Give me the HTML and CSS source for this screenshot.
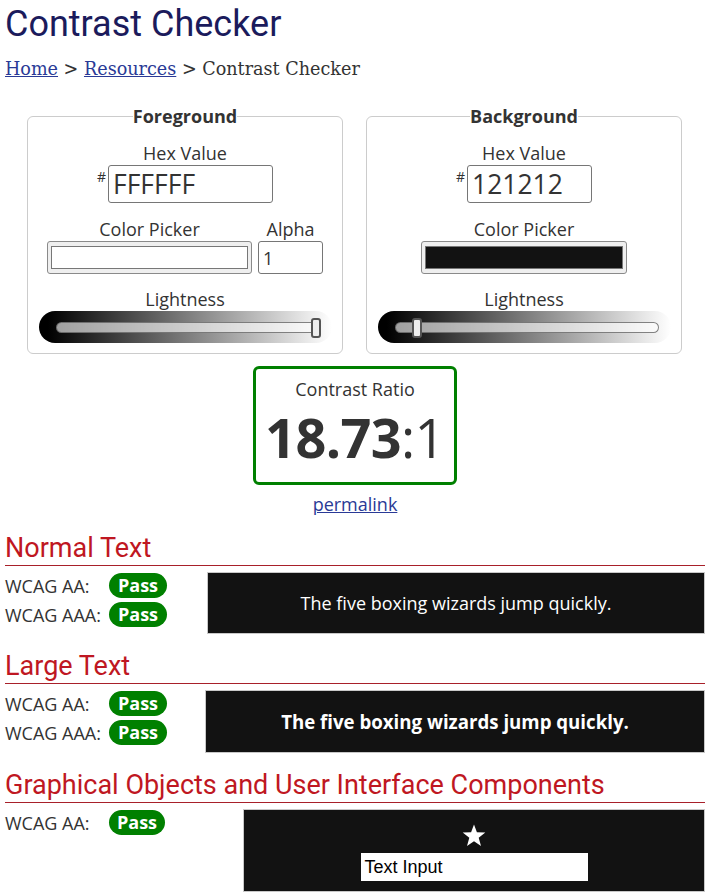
FILE: index.html
```
<!DOCTYPE html>
<html lang="en">
<head>
<meta charset="utf-8">
<title>Contrast Checker</title>
<link rel="stylesheet" href="styles.css">
</head>
<body>
<main class="page">
  <h1 class="title">Contrast Checker</h1>
  <nav class="crumbs"><a href="#">Home</a> &gt; <a href="#">Resources</a> &gt; Contrast Checker</nav>

  <div class="pickers">
    <fieldset class="panel">
      <legend class="panel-legend">Foreground</legend>
      <div class="field-label">Hex Value</div>
      <div class="hex-row">
        <span class="hash">#</span>
        <input class="hex-input hex-fg" type="text" value="FFFFFF">
      </div>
      <div class="picker-row">
        <div class="picker-col">
          <div class="field-label">Color Picker</div>
          <div class="swatch-box"><div class="swatch swatch-white"></div></div>
        </div>
        <div class="picker-col">
          <div class="field-label">Alpha</div>
          <input class="alpha-input" type="text" value="1">
        </div>
      </div>
      <div class="field-label light-label">Lightness</div>
      <div class="slider">
        <div class="track"><div class="thumb" style="left:254px"></div></div>
      </div>
    </fieldset>

    <fieldset class="panel">
      <legend class="panel-legend">Background</legend>
      <div class="field-label">Hex Value</div>
      <div class="hex-row">
        <span class="hash">#</span>
        <input class="hex-input hex-bg" type="text" value="121212">
      </div>
      <div class="picker-row">
        <div class="picker-col">
          <div class="field-label">Color Picker</div>
          <div class="swatch-box swatch-box-wide"><div class="swatch swatch-dark"></div></div>
        </div>
      </div>
      <div class="field-label light-label">Lightness</div>
      <div class="slider">
        <div class="track"><div class="thumb" style="left:16px"></div></div>
      </div>
    </fieldset>
  </div>

  <div class="ratio-wrap">
    <div class="ratio-box">
      <div class="ratio-label">Contrast Ratio</div>
      <div class="ratio-value"><strong>18.73</strong>:1</div>
    </div>
    <a class="permalink" href="#">permalink</a>
  </div>

  <section class="result">
    <h2 class="result-title">Normal Text</h2>
    <div class="result-body">
      <div class="result-left left-normal">
        <div class="check"><span class="check-label">WCAG AA:</span><span class="pass">Pass</span></div>
        <div class="check"><span class="check-label">WCAG AAA:</span><span class="pass">Pass</span></div>
      </div>
      <div class="preview preview-normal">The five boxing wizards jump quickly.</div>
    </div>
  </section>

  <section class="result">
    <h2 class="result-title">Large Text</h2>
    <div class="result-body">
      <div class="result-left left-large">
        <div class="check"><span class="check-label">WCAG AA:</span><span class="pass">Pass</span></div>
        <div class="check"><span class="check-label">WCAG AAA:</span><span class="pass">Pass</span></div>
      </div>
      <div class="preview preview-large">The five boxing wizards jump quickly.</div>
    </div>
  </section>

  <section class="result">
    <h2 class="result-title">Graphical Objects and User Interface Components</h2>
    <div class="result-body">
      <div class="result-left left-graph">
        <div class="check"><span class="check-label">WCAG AA:</span><span class="pass pass-narrow">Pass</span></div>
      </div>
      <div class="preview preview-graph">
        <svg class="star" width="24" height="23" viewBox="0 0 24 23" aria-hidden="true"><polygon points="12,0.5 14.9,8.3 23.3,8.6 16.7,13.8 19,21.9 12,17.2 5,21.9 7.3,13.8 0.7,8.6 9.1,8.3" fill="#fff"/></svg>
        <div class="text-input">Text Input</div>
      </div>
    </div>
  </section>
</main>
</body>
</html>
```
FILE: styles.css
```
* { box-sizing: border-box; }
html, body { margin: 0; padding: 0; background: #fff; }
body {
  font-family: "Open Sans", "Noto Sans", sans-serif;
  font-size: 18px;
  color: #333;
}
.page { padding: 3px 4px 0 5px; }

.title {
  margin: 0;
  font-family: Roboto, sans-serif;
  font-weight: 400;
  font-size: 36px;
  line-height: 42px;
  color: #1b1b5c;
}
.crumbs {
  margin-top: 11px;
  font-family: "DejaVu Serif", serif;
  font-size: 17.6px;
  line-height: 26px;
  color: #333;
}
.crumbs a { color: #2a3a96; }

.pickers {
  display: flex;
  justify-content: center;
  gap: 23px;
  margin-top: 22px;
  margin-left: -1px;
}
.panel {
  margin: 0;
  width: 316px;
  padding: 13px 0 10px;
  border: 1px solid #ccc;
  border-radius: 6px;
  display: flex;
  flex-direction: column;
  align-items: center;
  min-width: 0;
}
.panel-legend {
  padding: 0;
  margin: 0 auto;
  font-weight: 700;
  font-size: 18px;
  line-height: 24px;
  color: #333;
}
.field-label {
  font-size: 18px;
  line-height: 24px;
  text-align: center;
}
.light-label { margin-top: 13px; }
.hex-row {
  display: flex;
  align-items: flex-start;
  justify-content: center;
  gap: 2px;
}
.hash {
  font-size: 14px;
  line-height: 14px;
  margin-top: 5px;
}
.hex-input {
  height: 38px;
  border: 1px solid #767676;
  border-radius: 3px;
  padding: 0 4px;
  font-family: "Open Sans", sans-serif;
  font-size: 26.5px;
  color: #333;
  background: #fff;
}
.hex-fg { width: 165px; }
.hex-bg { width: 125px; }

.picker-row {
  display: flex;
  gap: 6px;
  margin-top: 14px;
  justify-content: center;
}
.picker-col {
  display: flex;
  flex-direction: column;
  align-items: center;
}
.swatch-box {
  width: 205px;
  height: 33px;
  background: #efefef;
  border: 1px solid #8a8a8a;
  border-radius: 3px;
  padding: 4px 3px;
}
.swatch-box-wide { width: 206px; }
.swatch {
  width: 100%;
  height: 100%;
  border: 1px solid #777;
}
.swatch-white { background: #fff; }
.swatch-dark { background: #121212; }
.alpha-input {
  width: 65px;
  height: 33px;
  border: 1px solid #767676;
  border-radius: 3px;
  padding: 0 4px;
  font-family: "Open Sans", sans-serif;
  font-size: 18px;
  color: #333;
  background: #fff;
}

.slider {
  width: 293px;
  height: 32px;
  border-radius: 16px;
  background: linear-gradient(to right, #000 3%, #fff 100%);
  padding: 11px 12px 0 17px;
}
.track {
  position: relative;
  height: 11px;
  border: 1px solid rgba(90, 90, 90, 0.75);
  border-radius: 6px;
  background: rgba(255, 255, 255, 0.62);
}
.thumb {
  position: absolute;
  top: -5px;
  width: 10px;
  height: 20px;
  background: #eee;
  border: 2px solid #555;
  border-radius: 3px;
}

.ratio-wrap {
  display: flex;
  flex-direction: column;
  align-items: center;
  margin-top: 12px;
}
.ratio-box {
  width: 204px;
  height: 119px;
  border: 3px solid #008000;
  border-radius: 6px;
  padding-top: 8px;
  text-align: center;
}
.ratio-label { font-size: 18px; line-height: 24px; }
.ratio-value {
  margin-top: 6px;
  font-size: 54px;
  line-height: 60px;
  letter-spacing: -0.6px;
  color: #333;
}
.ratio-value strong { font-weight: 700; }
.permalink {
  margin-top: 7px;
  line-height: 24px;
  color: #2a3a96;
}

.result { margin-top: 17px; }
.result-title {
  margin: 0;
  font-family: Roboto, sans-serif;
  font-weight: 400;
  font-size: 27px;
  line-height: 30px;
  padding-bottom: 2px;
  color: #bf1722;
  border-bottom: 1px solid #a8202a;
}
.result-body {
  display: flex;
  align-items: flex-start;
  margin-top: 5px;
}
.result-left { flex: none; }
.left-normal { width: 202px; }
.left-large { width: 200px; }
.left-graph { width: 238px; }
.check {
  display: flex;
  align-items: center;
  height: 29px;
}
.check-label { width: 104px; line-height: 24px; }
.pass {
  width: 58px;
  height: 25px;
  border-radius: 12.5px;
  background: #008000;
  color: #fff;
  font-weight: 700;
  font-size: 18px;
  line-height: 25px;
  text-align: center;
}
.pass-narrow { width: 56px; }

.preview {
  flex: 1;
  margin-top: 1px;
  background: #121212;
  border: 1px solid #c8c8c8;
  color: #fff;
  display: flex;
  flex-direction: column;
  align-items: center;
  justify-content: center;
}
.preview-normal { height: 62px; font-size: 18px; }
.preview-large { height: 63px; font-size: 18.67px; font-weight: 700; }
.preview-graph {
  height: 83px;
  justify-content: flex-start;
  padding-top: 14px;
}
.star { display: block; }
.text-input {
  margin-top: 6px;
  width: 227px;
  height: 28px;
  background: #fff;
  color: #000;
  font-family: "Liberation Sans", Arial, sans-serif;
  font-size: 18px;
  line-height: 28px;
  padding-left: 4px;
}
```
